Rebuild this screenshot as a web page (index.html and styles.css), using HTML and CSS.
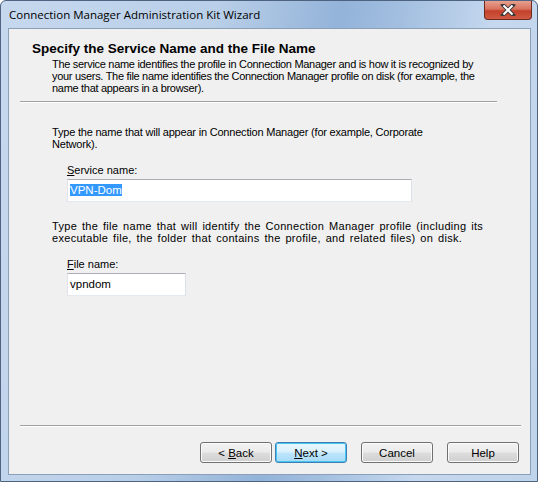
FILE: index.html
```html
<!DOCTYPE html>
<html lang="en">
<head>
    <meta charset="UTF-8">
    <title>Connection Manager Administration Kit Wizard</title>
    <link rel="stylesheet" href="styles.css">
</head>
<body>
    <div class="window">
        <div class="titlebar">
            <span class="title">Connection Manager Administration Kit Wizard</span>
            <div class="close">
                <svg width="16" height="12" viewBox="0 0 16 12">
                    <path d="M3 1 L13 11 M13 1 L3 11" stroke="#3b3b3b" stroke-width="4" stroke-linecap="square"/>
                    <path d="M3.5 1.5 L12.5 10.5 M12.5 1.5 L3.5 10.5" stroke="#fff" stroke-width="2"/>
                </svg>
            </div>
        </div>
        <div class="client">
            <div class="header">
                <h1 class="heading">Specify the Service Name and the File Name</h1>
                <p class="desc">The service name identifies the profile in Connection Manager and is how it is recognized by your users. The file name identifies the Connection Manager profile on disk (for example, the name that appears in a browser).</p>
            </div>
            <div class="rule top-rule"></div>
            <div class="content">
                <p class="text first">Type the name that will appear in Connection Manager (for example, Corporate Network).</p>
                <label class="label"><u>S</u>ervice name:</label>
                <div class="input wide"><span class="sel">VPN-Dom</span></div>
                <p class="text second">Type the file name that will identify the Connection Manager profile (including its executable file, the folder that contains the profile, and related files) on disk.</p>
                <label class="label"><u>F</u>ile name:</label>
                <div class="input narrow">vpndom</div>
            </div>
            <div class="rule bottom-rule"></div>
            <div class="buttons">
                <button class="btn">&lt; <u>B</u>ack</button>
                <button class="btn default"><u>N</u>ext &gt;</button>
                <button class="btn gap">Cancel</button>
                <button class="btn gap">Help</button>
            </div>
        </div>
    </div>
</body>
</html>
```

FILE: styles.css
```css
* {
    margin: 0;
    padding: 0;
    box-sizing: border-box;
}
body {
    width: 538px;
    height: 482px;
    overflow: hidden;
    font-family: "Liberation Sans", Arial, sans-serif;
    font-size: 11px;
    color: #000;
}
.window {
    width: 538px;
    height: 482px;
    display: flex;
    flex-direction: column;
    padding: 0 6px 6px 7px;
    border: 1px solid #4d6380;
    border-radius: 6px 6px 0 0;
    background: linear-gradient(100deg, #c6d8ee 0%, #b9cfe8 35%, #93b3d9 55%, #a3bfe0 65%, #c5d8ee 80%, #bfd3ea 100%);
}
.titlebar {
    height: 27px;
    display: flex;
    align-items: flex-start;
    justify-content: space-between;
}
.title {
    font-family: "Open Sans", "Noto Sans", sans-serif;
    font-size: 11.5px;
    color: #000;
    margin-top: 6px;
    margin-left: 1px;
}
.close {
    width: 48px;
    height: 19px;
    margin-right: -1px;
    border: 1px solid #6e2a21;
    border-top: none;
    border-radius: 0 0 4px 4px;
    background: linear-gradient(#e8a090 0%, #d9725d 45%, #c4402a 55%, #cf5a42 100%);
    display: flex;
    align-items: center;
    justify-content: center;
}
.client {
    flex: 1;
    background: #f0f0f0;
    border: 1px solid #8b9fb8;
    display: flex;
    flex-direction: column;
}
.header {
    padding: 12px 0 0 23px;
}
.heading {
    font-size: 13.5px;
    font-weight: bold;
    line-height: 16px;
}
.desc {
    margin: 1px 40px 0 20px;
    line-height: 12px;
    letter-spacing: -0.3px;
}
.rule {
    height: 2px;
    border-top: 1px solid #a0a0a0;
    border-bottom: 1px solid #fff;
    margin-left: 11px;
}
.top-rule {
    width: 477px;
    margin-top: 7px;
}
.content {
    flex: 1;
    padding: 23px 0 0 43px;
}
.text {
    line-height: 12px;
    letter-spacing: -0.2px;
}
.text.first {
    width: 390px;
}
.text.second {
    width: 450px;
    margin-top: 18px;
    letter-spacing: 0.3px;
    word-spacing: 1.5px;
}
.label {
    display: block;
    margin: 13px 0 2px 15px;
    line-height: 14px;
}
.input {
    margin-left: 15px;
    height: 23px;
    background: #fff;
    border: 1px solid #abadb3;
    border-left-color: #e2e3ea;
    border-right-color: #dbdfe6;
    border-bottom-color: #e3e9ef;
    padding: 3px 2px;
    font-size: 11.5px;
    line-height: 15px;
}
.input.wide {
    width: 345px;
}
.input.narrow {
    width: 119px;
}
.sel {
    background: #3399ff;
    color: #fff;
}
.bottom-rule {
    width: 501px;
    margin-bottom: 15px;
}
.buttons {
    display: flex;
    justify-content: flex-end;
    padding: 0 11px 11px 0;
}
.btn {
    width: 72px;
    height: 21px;
    margin-left: 3px;
    font-family: "Liberation Sans", Arial, sans-serif;
    font-size: 11.5px;
    border: 1px solid #707070;
    border-radius: 3px;
    background: linear-gradient(#f2f2f2 0%, #ebebeb 48%, #dddddd 52%, #cfcfcf 100%);
    box-shadow: inset 0 0 0 1px #fbfbfb;
    color: #000;
}
.btn.default {
    border-color: #3c7fb1;
    background: linear-gradient(#eaf6fd 0%, #d9f0fc 48%, #bee6fd 52%, #a7d9f5 100%);
    box-shadow: inset 0 0 0 1px #48c4f4;
}
.btn.gap {
    margin-left: 14px;
}
```
